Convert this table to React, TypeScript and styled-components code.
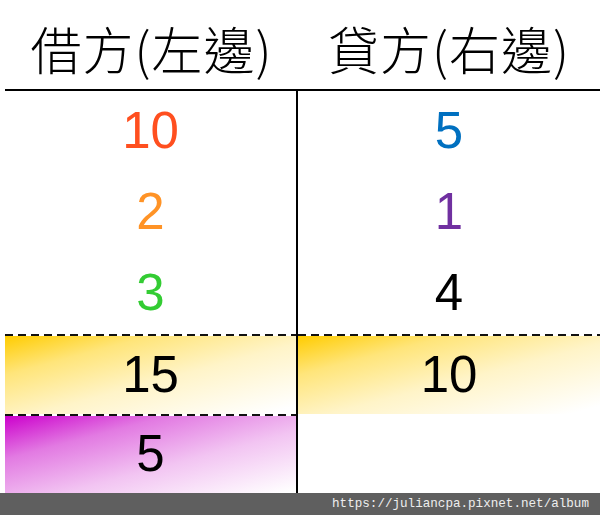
import styled, { createGlobalStyle } from 'styled-components';

const GlobalStyle = createGlobalStyle`
  html, body {
    margin: 0;
    padding: 0;
    background: #ffffff;
  }
`;

const Page = styled.div`
  width: 600px;
  height: 515px;
  display: flex;
  flex-direction: column;
  overflow: hidden;
  background: #fff;
`;

const HeaderRow = styled.div`
  display: grid;
  grid-template-columns: 293px 302px;
  height: 89px;
  margin-left: 5px;
  border-bottom: 2px solid #000;
`;

const HeadCell = styled.div`
  display: flex;
  align-items: center;
  justify-content: center;
  padding-top: 6px;
  font-family: 'Noto Sans CJK TC', 'Liberation Serif', serif;
  font-weight: 300;
  font-size: 51px;
  color: #000;
  letter-spacing: 1px;
`;

const Body = styled.div`
  display: grid;
  grid-template-columns: 293px 302px;
  margin-left: 5px;
  flex: 1;
`;

const Column = styled.div<{ $divider?: boolean }>`
  display: flex;
  flex-direction: column;
  border-right: ${(p) => (p.$divider ? '2px solid #000' : 'none')};
`;

const Cell = styled.div<{ $color?: string; $height: number; $bg?: string }>`
  height: ${(p) => p.$height}px;
  display: flex;
  align-items: center;
  justify-content: center;
  padding-bottom: 2px;
  box-sizing: border-box;
  font-family: 'Liberation Sans', Arial, sans-serif;
  font-size: 51px;
  color: ${(p) => p.$color || '#000'};
  background: ${(p) => p.$bg || 'transparent'};
`;

const DashedRule = styled.div`
  height: 2px;
  background: repeating-linear-gradient(to right, #111 0 8px, transparent 8px 13px);
`;

const Footer = styled.div`
  height: 22px;
  background: #5f5f5f;
  display: flex;
  align-items: center;
  justify-content: flex-end;
  padding-right: 11px;
  font-family: 'Liberation Mono', 'Courier New', monospace;
  font-size: 12.6px;
  color: #eeeeee;
`;

const yellow = 'linear-gradient(to bottom right, #ffcc00 0%, #ffe57a 25%, #fff4c8 55%, #ffffff 95%)';
const purple = 'linear-gradient(to bottom right, #cc00cc 0%, #e27ae2 28%, #f2c4f2 60%, #ffffff 98%)';

const App = () => {
  return (
    <Page>
      <GlobalStyle />
      <HeaderRow>
        <HeadCell>借方(左邊)</HeadCell>
        <HeadCell>貸方(右邊)</HeadCell>
      </HeaderRow>
      <Body>
        <Column $divider>
          <Cell $height={81} $color="#ff4f1f">10</Cell>
          <Cell $height={81} $color="#ff9326">2</Cell>
          <Cell $height={81} $color="#33cc33">3</Cell>
          <DashedRule />
          <Cell $height={78} $bg={yellow}>15</Cell>
          <DashedRule />
          <Cell $height={77} $bg={purple}>5</Cell>
        </Column>
        <Column>
          <Cell $height={81} $color="#0070c0">5</Cell>
          <Cell $height={81} $color="#7030a0">1</Cell>
          <Cell $height={81}>4</Cell>
          <DashedRule />
          <Cell $height={78} $bg={yellow}>10</Cell>
        </Column>
      </Body>
      <Footer>https://juliancpa.pixnet.net/album</Footer>
    </Page>
  );
};

export default App;
